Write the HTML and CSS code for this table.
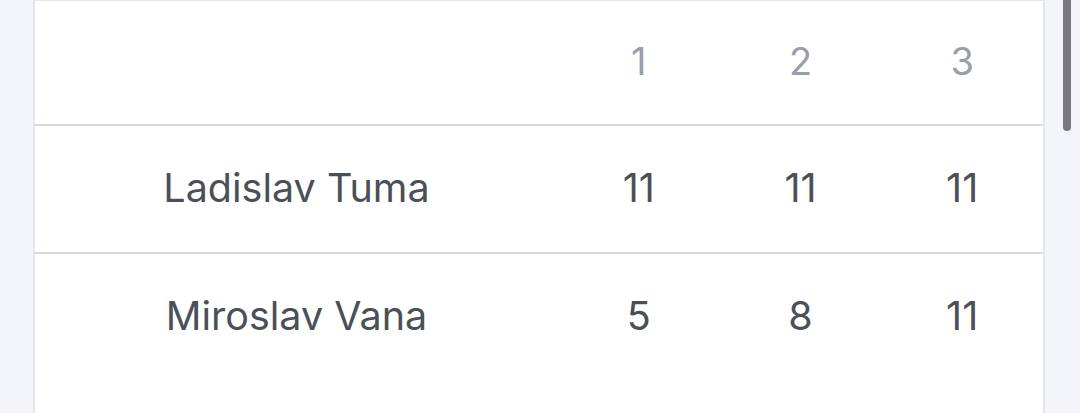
FILE: index.html
```html
<!DOCTYPE html>
<html lang="en">
<head>
<meta charset="utf-8">
<link rel="stylesheet" href="styles.css">
</head>
<body>
<div class="page">
  <div class="card">
    <div class="row head">
      <div class="cell name"></div>
      <div class="cell">1</div>
      <div class="cell">2</div>
      <div class="cell">3</div>
    </div>
    <div class="row">
      <div class="cell name">Ladislav Tuma</div>
      <div class="cell">11</div>
      <div class="cell">11</div>
      <div class="cell">11</div>
    </div>
    <div class="row last">
      <div class="cell name">Miroslav Vana</div>
      <div class="cell">5</div>
      <div class="cell">8</div>
      <div class="cell">11</div>
    </div>
  </div>
  <div class="scrollbar"></div>
</div>
</body>
</html>
```
FILE: styles.css
```css
html, body {
  margin: 0;
  padding: 0;
  background: #f4f5f9;
  height: 100%;
  overflow: hidden;
}
.page {
  position: relative;
  padding-left: 33px;
  height: 413px;
  font-family: Inter, "Noto Sans", sans-serif;
}
.card {
  width: 1008px;
  background: #ffffff;
  border-left: 2px solid #e2e5ed;
  border-right: 2px solid #e2e5ed;
  border-top: 1px solid #e6e8ee;
  height: 412px;
}
.row {
  display: grid;
  grid-template-columns: 523px 1fr 1fr 1fr;
  height: 126px;
  border-bottom: 2px solid #d3d8e6;
  align-items: center;
  color: #4b5058;
  font-size: 39.5px;
}
.row.head {
  height: 125px;
  padding-bottom: 4px;
  box-sizing: border-box;
  color: #9a9ea9;
  font-size: 38px;
}
.row.last {
  border-bottom: none;
}
.cell {
  text-align: center;
  line-height: 1;
}
.scrollbar {
  position: absolute;
  left: 1063px;
  top: -10px;
  width: 8px;
  height: 141px;
  border-radius: 4px;
  background: #77777c;
}
```
